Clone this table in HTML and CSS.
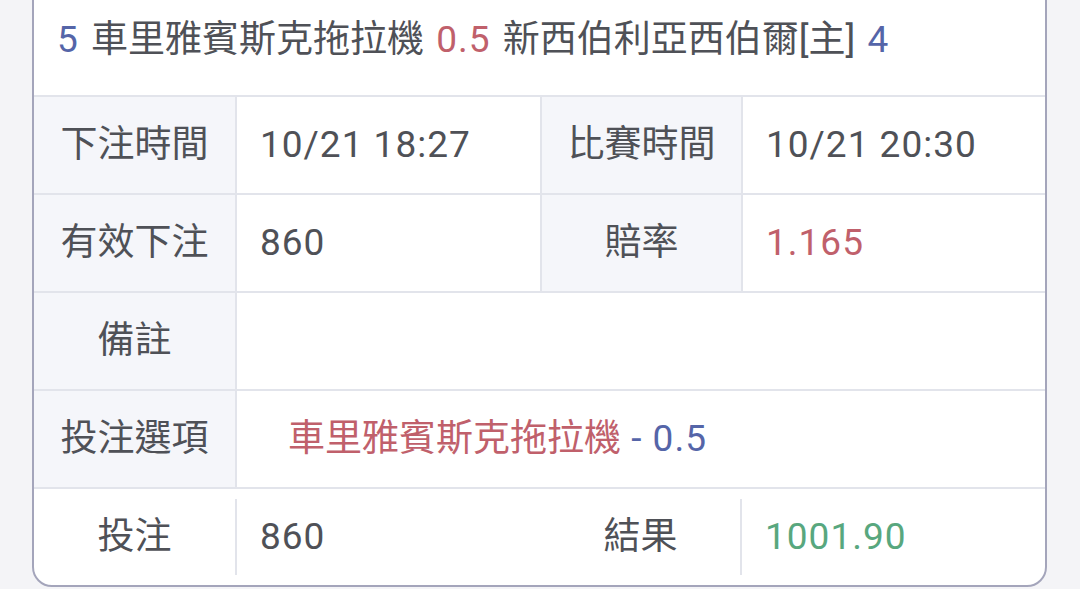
FILE: index.html
```html
<!DOCTYPE html>
<html lang="zh-Hant">
<head>
<meta charset="utf-8">
<title>注單詳情</title>
<link rel="stylesheet" href="styles.css">
</head>
<body>
<div class="card">
  <div class="title">
    <span class="blue num">5</span> 車里雅賓斯克拖拉機 <span class="red num">0.5</span> 新西伯利亞西伯爾[主] <span class="blue num">4</span>
  </div>
  <div class="grid">
    <div class="label">下注時間</div>
    <div class="value">10/21 18:27</div>
    <div class="label">比賽時間</div>
    <div class="value">10/21 20:30</div>

    <div class="label">有效下注</div>
    <div class="value">860</div>
    <div class="label">賠率</div>
    <div class="value red">1.165</div>

    <div class="label">備註</div>
    <div class="value wide"></div>

    <div class="label">投注選項</div>
    <div class="value wide pick"><span class="red">車里雅賓斯克拖拉機</span><span class="blue num">&nbsp;- 0.5</span></div>
  </div>
  <div class="foot">
    <div class="fcell flabel c1">投注</div>
    <div class="fcell fvalue c2 divided">860</div>
    <div class="fcell flabel c3">結果</div>
    <div class="fcell fvalue c4 divided green">1001.90</div>
  </div>
</div>
</body>
</html>
```

FILE: styles.css
```css
html, body {
  margin: 0;
  padding: 0;
}
body {
  background: #f4f4f7;
  font-family: Roboto, "Noto Sans CJK TC", sans-serif;
  color: #4f5157;
  font-size: 37px;
  height: 589px;
  overflow: hidden;
}
.card {
  box-sizing: border-box;
  width: 1015px;
  margin: -12px 0 0 32px;
  background: #fff;
  border: 2px solid #a4a5bb;
  border-radius: 0 0 20px 20px;
  overflow: hidden;
}
.title {
  box-sizing: border-box;
  height: 107px;
  padding: 28px 0 0 23px;
  line-height: 44px;
  white-space: nowrap;
  word-spacing: 3px;
  border-bottom: 2px solid #e2e4eb;
}
.num { letter-spacing: 1px; }
.blue { color: #5565a8; }
.red { color: #c0606b; }
.green { color: #58a77e; }
.grid {
  display: grid;
  grid-template-columns: 201px 303px 199px 1fr;
  grid-template-rows: repeat(4, 96px);
  gap: 2px;
  background: #e2e4eb;
}
.label, .value {
  display: flex;
  align-items: center;
  line-height: 44px;
}
.label {
  background: #f5f6fa;
  justify-content: center;
}
.value {
  background: #fff;
  padding-left: 23px;
  letter-spacing: 1px;
}
.wide {
  grid-column: 2 / 5;
}
.pick {
  padding-left: 51px;
  letter-spacing: 0;
}
.foot {
  display: flex;
  align-items: center;
  height: 96px;
  border-top: 2px solid #e2e4eb;
}
.fcell {
  box-sizing: border-box;
  height: 76px;
  display: flex;
  align-items: center;
  line-height: 44px;
}
.flabel { justify-content: center; }
.fvalue { padding-left: 23px; letter-spacing: 1px; }
.divided { border-left: 2px solid #e2e4eb; }
.c1 { width: 201px; }
.c2 { width: 306px; }
.c3 { width: 199px; }
.c4 { flex: 1; }
```
